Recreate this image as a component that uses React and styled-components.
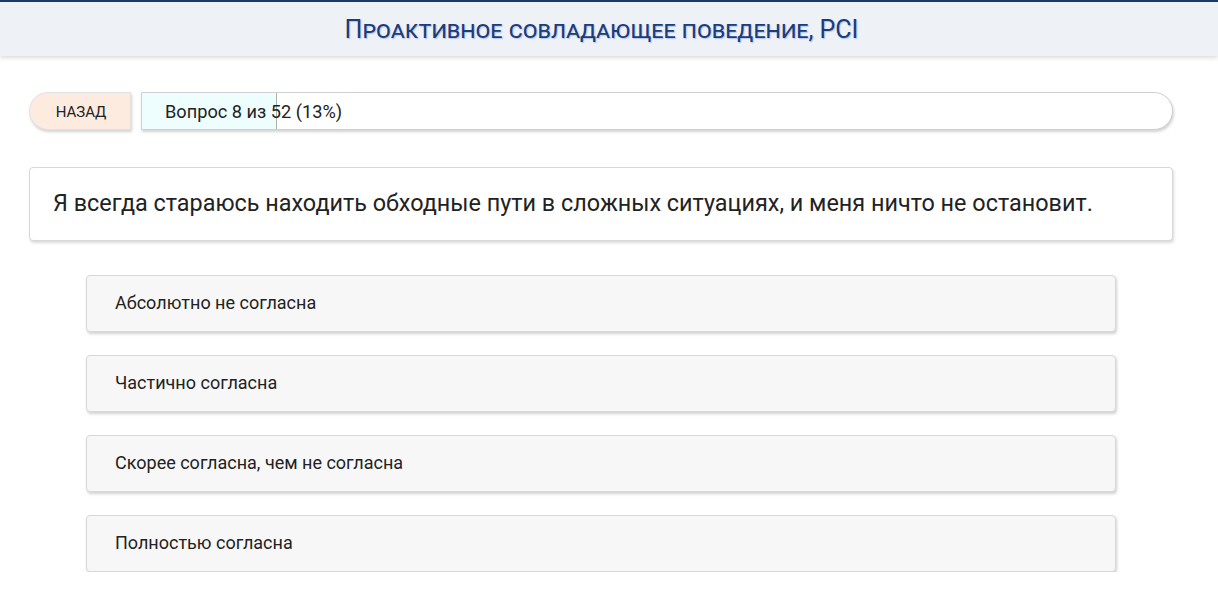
import React from "react";
import styled, { createGlobalStyle } from "styled-components";

const GlobalStyle = createGlobalStyle`
  html, body {
    margin: 0;
    padding: 0;
    background: #ffffff;
    font-family: Roboto, "Noto Sans", sans-serif;
    color: #222222;
  }
`;

const answers = [
  "Абсолютно не согласна",
  "Частично согласна",
  "Скорее согласна, чем не согласна",
  "Полностью согласна",
];

const current = 8;
const total = 52;
const answered = current - 1;

const App = () => {
  const percent = Math.floor((answered / total) * 100);

  return (
    <>
      <GlobalStyle />
      <Header>
        <Title>Проактивное совладающее поведение, PCI</Title>
      </Header>
      <Main>
        <ProgressRow>
          <BackButton type="button">назад</BackButton>
          <ProgressTrack>
            <ProgressFill style={{ width: percent + "%" }} />
            <ProgressLabel>
              Вопрос {current} из {total} ({percent}%)
            </ProgressLabel>
          </ProgressTrack>
        </ProgressRow>
        <QuestionCard>
          Я всегда стараюсь находить обходные пути в сложных ситуациях, и меня
          ничто не остановит.
        </QuestionCard>
        <AnswerList>
          {answers.map((answer) => (
            <AnswerButton key={answer} type="button">
              {answer}
            </AnswerButton>
          ))}
        </AnswerList>
      </Main>
    </>
  );
};

const Header = styled.header`
  height: 54px;
  padding-right: 15px;
  border-top: 2px solid #163a6b;
  background: #eef2f7;
  box-shadow: 0 2px 4px rgba(0, 0, 0, 0.14);
  display: flex;
  align-items: center;
  justify-content: center;
`;

const Title = styled.h1`
  margin: 0;
  font-family: Roboto, sans-serif;
  font-size: 25px;
  font-weight: 400;
  font-variant: small-caps;
  color: #1c3d78;
  text-shadow: 1px 1px 1px rgba(60, 110, 230, 0.35);
`;

const Main = styled.main`
  width: 1144px;
  padding: 36px 0 0 29px;
`;

const ProgressRow = styled.div`
  display: flex;
  gap: 10px;
  height: 38px;
`;

const BackButton = styled.button`
  width: 102px;
  border: 1px solid #e2e2e2;
  border-radius: 19px 0 0 19px;
  background: #fdebe0;
  box-shadow: 1px 2px 3px rgba(0, 0, 0, 0.18);
  font-family: Roboto, sans-serif;
  font-size: 15px;
  text-transform: uppercase;
  color: #222;
  padding: 2px 0 0 2px;
  cursor: pointer;
`;

const ProgressTrack = styled.div`
  flex: 1;
  position: relative;
  display: flex;
  align-items: center;
  border: 1px solid #d0d0d0;
  border-radius: 0 19px 19px 0;
  background: #fff;
  box-shadow: 1px 2px 3px rgba(0, 0, 0, 0.18);
  overflow: hidden;
`;

const ProgressFill = styled.div`
  position: absolute;
  left: 0;
  top: 0;
  bottom: 0;
  background: #eefdfd;
  border-right: 1px solid #a8b4b4;
`;

const ProgressLabel = styled.span`
  position: relative;
  padding-left: 23px;
  font-size: 18.2px;
  color: #222;
`;

const QuestionCard = styled.div`
  margin-top: 37px;
  height: 74px;
  box-sizing: border-box;
  display: flex;
  align-items: center;
  padding: 0 23px 2px;
  border: 1px solid #d8d8d8;
  border-radius: 4px;
  background: #fff;
  box-shadow: 1px 2px 3px rgba(0, 0, 0, 0.15);
  font-size: 23.4px;
  color: #222;
`;

const AnswerList = styled.div`
  margin-top: 34px;
  padding: 0 57px;
  display: flex;
  flex-direction: column;
  gap: 23px;
`;

const AnswerButton = styled.button`
  height: 57px;
  text-align: left;
  padding: 0 28px 2px;
  border: 1px solid #d8d8d8;
  border-radius: 4px;
  background: #f7f7f7;
  box-shadow: 1px 2px 3px rgba(0, 0, 0, 0.18);
  font-family: Roboto, sans-serif;
  font-size: 18px;
  color: #222;
  cursor: pointer;
`;

export default App;
